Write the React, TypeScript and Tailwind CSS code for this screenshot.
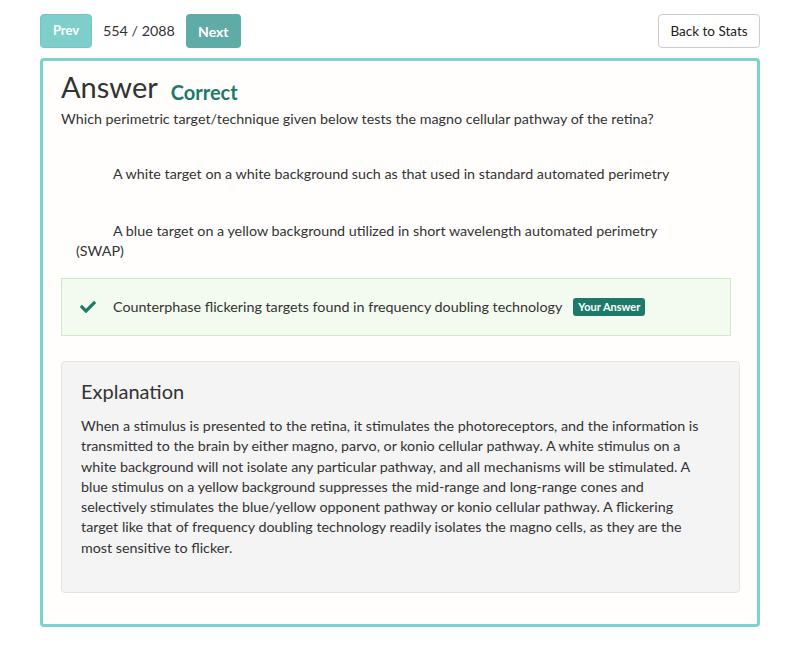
import { FaCheck } from 'react-icons/fa';

const options = [
  {
    id: 'a',
    text: 'A white target on a white background such as that used in standard automated perimetry',
    chosen: false,
  },
  {
    id: 'b',
    text: 'A blue target on a yellow background utilized in short wavelength automated perimetry (SWAP)',
    chosen: false,
  },
  {
    id: 'c',
    text: 'Counterphase flickering targets found in frequency doubling technology',
    chosen: true,
  },
];

export default function App() {
  return (
    <div
      className="min-h-[649px] bg-white text-[#333] pt-[14px] px-10"
      style={{ fontFamily: 'Lato, "Open Sans", sans-serif' }}
    >
      {/* nav */}
      <div className="flex items-center justify-between h-[34px]">
        <div className="flex items-center">
          <button className="h-[34px] w-[52px] rounded-[4px] border border-[#72c6c2] bg-[#7ecfcb] text-white text-[13px] font-bold">
            Prev
          </button>
          <span className="ml-[11px] mr-[11px] text-[14.3px] text-[#333]">554 / 2088</span>
          <button className="h-[34px] w-[55px] rounded-[4px] bg-[#5faba7] text-white text-[14px] font-bold">
            Next
          </button>
        </div>
        <button className="h-[34px] w-[102px] rounded-[4px] border border-[#ccc] bg-white text-[13.5px] text-[#222]">
          Back to Stats
        </button>
      </div>

      {/* answer panel */}
      <div className="mt-[10px] border-[3px] border-[#7fd1cf] rounded-[4px] bg-[#fffefc] pl-[18px] pr-[17px] pt-[8px] pb-[31px]">
        <div className="flex items-end">
          <h1 className="text-[29px] leading-[36px] text-[#333]">Answer</h1>
          <span className="ml-[13px] text-[20px] font-bold text-[#1d7a68] leading-[26px]">Correct</span>
        </div>
        <p className="text-[14.3px] leading-[20px] mt-[4px]">
          Which perimetric target/technique given below tests the magno cellular pathway of the retina?
        </p>

        <div className="mt-[35px] mr-[9px] text-[14.3px]">
          {options.map((o, i) =>
            o.chosen ? (
              <div
                key={o.id}
                className="flex items-center border border-[#cfe9c9] bg-[#f3faf0] px-[16px] h-[58px]"
              >
                <FaCheck className="text-[#1d7a68] w-[20px] h-[16px] mr-[15px]" />
                <span>{o.text}</span>
                <span className="ml-[11px] rounded-[3px] bg-[#1d7a68] px-[5px] py-[2px] text-[11px] leading-[14px] font-bold text-white">
                  Your Answer
                </span>
              </div>
            ) : (
              <div
                key={o.id}
                className={`pl-[15px] pr-[40px] leading-[20px] ${i === 0 ? 'mb-[37px]' : 'mb-[17px]'}`}
              >
                <span className="inline-block w-[37px]" />
                {o.text}
              </div>
            )
          )}
        </div>

        {/* explanation */}
        <div className="mt-[25px] rounded-[4px] border border-[#e3e3e3] bg-[#f4f4f4] pl-[19px] pr-[28px] pt-[15px] pb-[34px]">
          <h2 className="text-[20px] leading-[28px] text-[#333]">Explanation</h2>
          <p className="mt-[11px] text-[14.3px] leading-[20.3px]">
            When a stimulus is presented to the retina, it stimulates the photoreceptors, and the information is
            transmitted to the brain by either magno, parvo, or konio cellular pathway. A white stimulus on a white
            background will not isolate any particular pathway, and all mechanisms will be stimulated. A blue stimulus
            on a yellow background suppresses the mid-range and long-range cones and selectively stimulates the
            blue/yellow opponent pathway or konio cellular pathway. A flickering target like that of frequency doubling
            technology readily isolates the magno cells, as they are the most sensitive to flicker.
          </p>
        </div>
      </div>
    </div>
  );
}
